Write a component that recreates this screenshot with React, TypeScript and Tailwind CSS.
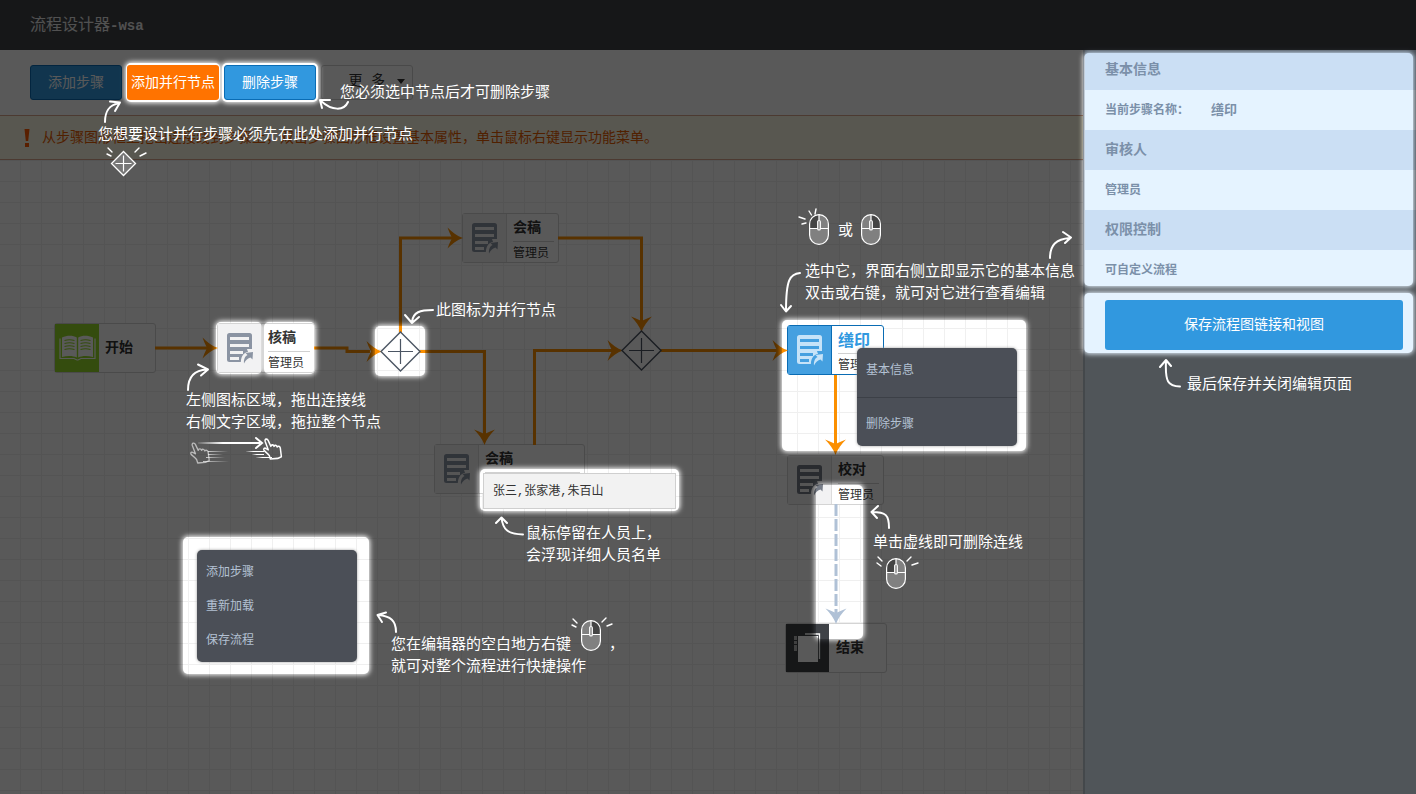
import React from "react";

type Tone = "gray" | "blue" | "dark";

const toneBox: Record<Tone, string> = {
  gray: "border-[#d4d4d4] bg-white",
  blue: "border-[#0a6cb4] bg-white",
  dark: "border-[#d4d4d4] bg-white",
};
const toneIcon: Record<Tone, string> = {
  gray: "border-[#dcdcdc] bg-[#f2f2f3] text-[#8b94a3]",
  blue: "border-[#0a6cb4] bg-[#45a0e0] text-[#c6e3f8]",
  dark: "border-[#dcdcdc] bg-[#f2f2f3] text-[#767c87]",
};
const toneSlit: Record<Tone, string> = { gray: "#f2f2f3", blue: "#45a0e0", dark: "#f2f2f3" };

function DocIcon({ tone }: { tone: Tone }) {
  const s = toneSlit[tone];
  return (
    <svg width="27" height="32" viewBox="0 0 27 32" aria-hidden="true">
      <rect x="0" y="0" width="25" height="29" rx="2.5" fill="currentColor" />
      <path d="M3 5.5h19M3 12.5h19M3 19.5h13M3 25.5h9" stroke={s} strokeWidth="3" />
      <path d="M14 32c-1-8 3-13 7-13l-1-3h7v16z" fill={s} />
      <path d="M17 30.5c-.5-5 1.500-7.500 3.500-8.500l-2-2 7.500-1-.5 7.500-2-2c-2.500 1-5 2.500-6.500 6z" fill="currentColor" />
    </svg>
  );
}

function StepNode(props: { name: string; person?: string; tone?: Tone; place: string }) {
  const tone = props.tone ?? "gray";
  return (
    <div className={`absolute flex h-[50px] rounded-[3px] border ${toneBox[tone]} ${props.place}`}>
      <div className={`flex w-[44px] shrink-0 items-center justify-center border-r pt-0.5 pl-0.5 ${toneIcon[tone]}`}>
        <DocIcon tone={tone} />
      </div>
      <div className="flex flex-1 flex-col overflow-hidden pl-1.5 pr-1 whitespace-nowrap">
        <div
          className={
            tone === "blue"
              ? "h-7 border-b border-[#d0d0d0] text-[16px] leading-[26px] font-bold text-[#3198df]"
              : "h-7 border-b border-[#d0d0d0] text-[14px] leading-[25px] font-bold text-[#333]"
          }
        >
          {props.name}
        </div>
        {props.person && <div className="text-[12px] leading-[20px] text-[#333]">{props.person}</div>}
      </div>
    </div>
  );
}

function Junction({ x, y }: { x: number; y: number }) {
  return (
    <g transform={`translate(${x} ${y})`} stroke="#4b5563" fill="#fff">
      <path d="M0-19.500 19.500 0 0 19.500-19.500 0z" strokeWidth="1.400" />
      <path d="M0-12.500v25M-12.500 0h25" strokeWidth="1.200" />
    </g>
  );
}

function Head({ x, y, down = false, color = "#fb8f00" }: { x: number; y: number; down?: boolean; color?: string }) {
  return (
    <path
      transform={`translate(${x} ${y}) rotate(${down ? 90 : 0})`}
      d="M0 0C-6-2-11-6-15.500-10.500Q-14-6-11 0Q-14 6-15.500 10.500C-11 6-6 2 0 0z"
      fill={color}
    />
  );
}

function Connectors() {
  return (
    <svg className="absolute inset-0 h-full w-full" aria-hidden="true">
      <g transform="translate(0 -160)">
        <g fill="none" stroke="#fb8f00" strokeWidth="3">
          <path d="M155 348H208" />
          <path d="M314 348H347V351.500H370" />
          <path d="M400.500 333V238H452" />
          <path d="M558 238H641.500V322" />
          <path d="M419 351.500H484.500V435" />
          <path d="M534.500 445V350.500H612" />
          <path d="M660 350.500H777" />
          <path d="M835.500 375V445" />
          <path d="M836 504V617" stroke="#b0c1d6" strokeDasharray="12 3" />
        </g>
        <Head x={218} y={348} />
        <Head x={382} y={351.5} />
        <Head x={463} y={238} />
        <Head x={641.5} y={332} down />
        <Head x={484.5} y={445} down />
        <Head x={623} y={350.5} />
        <Head x={788} y={350.5} />
        <Head x={835.5} y={455} down />
        <Head x={836} y={624} down color="#b0c1d6" />
        <Junction x={400.5} y={351.5} />
        <Junction x={641.5} y={350.5} />
      </g>
    </svg>
  );
}

function MenuItem({ children }: { children: React.ReactNode }) {
  return (
    <li>
      <button type="button" className="block h-[34px] w-full px-[9px] text-left text-[12px] leading-[34px] text-[#b3c1d3]">
        {children}
      </button>
    </li>
  );
}

function Canvas() {
  return (
    <section className="relative min-h-[634px] flex-1 overflow-hidden bg-white bg-[linear-gradient(to_right,#f0f0f0_1px,transparent_1px),linear-gradient(to_bottom,#efefef_1px,transparent_1px)] bg-size-[21px_21px] bg-position-[-1px_0px]">
      <div className="absolute top-[163px] left-[54px] flex h-[50px] w-[102px] items-center rounded-[3px] border border-[#d4d4d4] bg-white">
        <div className="flex h-[48px] w-[44px] items-center justify-center bg-[#94da28]">
          <svg width="37" height="26" viewBox="0 0 37 26" aria-hidden="true">
            <path d="M1 3.500v20h14l3 1.500h1l3-1.500h14v-20" fill="none" stroke="#fff" strokeWidth="1.200" />
            <path d="M3 2.500C8 0 14 0 17.800 2.500V22.500C14 20.500 8 20.500 3 22zM34 2.500C29 0 23 0 19.200 2.500V22.500C23 20.500 29 20.500 34 22z" fill="#fff" />
            <path d="M5.500 5.500q5-1.500 10 0M5.500 8.500q5-1.500 10 0M5.500 11.500q5-1.500 10 0M5.500 14.500q5-1.500 10 0M21.500 5.500q5-1.500 10 0M21.500 8.500q5-1.500 10 0M21.500 11.500q5-1.500 10 0M21.500 14.500q5-1.500 10 0" fill="none" stroke="#94da28" strokeWidth="1.200" />
          </svg>
        </div>
        <span className="pb-[3px] pl-1.5 text-[14px] font-bold text-[#333]">开始</span>
      </div>

      <StepNode name="核稿" person="管理员" place="left-[217px] top-[163px] w-[98px]" />
      <StepNode name="会稿" person="管理员" place="left-[462px] top-[53px] w-[97px]" />
      <StepNode name="会稿" place="left-[434px] top-[284px] w-[151px]" />
      <StepNode name="缮印" person="管理员" tone="blue" place="left-[787px] top-[165px] w-[97px]" />
      <StepNode name="校对" person="管理员" tone="dark" place="left-[787px] top-[295px] w-[97px]" />

      <div className="absolute top-[463px] left-[785px] flex h-[50px] w-[102px] items-center rounded-[3px] border border-[#d4d4d4] bg-white">
        <div className="flex h-[48px] w-[43px] items-center justify-center bg-[#3f4247]">
          <svg width="27" height="30" viewBox="0 0 27 30" aria-hidden="true">
            <path d="M11 1h14.500v25" fill="none" stroke="#fff" strokeWidth="1.300" />
            <path d="M4 3h20v26H4z" fill="#fff" />
            <path d="M0 3h3v4H0zM0 8h3v3H0zM0 12h3v6H0z" fill="#b8b8b8" />
          </svg>
        </div>
        <span className="pb-[3px] pl-[7px] text-[14px] font-bold text-[#333]">结束</span>
      </div>

      <Connectors />

      <div role="tooltip" className="absolute top-[313px] left-[483px] h-9 w-[193px] border border-[#cfcfcf] bg-[#f2f2f2] pl-[9px] font-['Liberation_Mono','Noto_Sans_CJK_SC',monospace] text-[12px] leading-9 text-[#333]">
        张三,张家港,朱百山
      </div>
      <ul className="absolute top-[188px] left-[857px] w-[160px] rounded-[5px] bg-[#4b4f57] pt-1 pb-1.5 shadow-[0_0_3px_#999]">
        <MenuItem>基本信息</MenuItem>
        <li role="separator" className="mt-[11px] mb-2 h-px bg-[#3c4047]" />
        <MenuItem>删除步骤</MenuItem>
      </ul>
      <ul className="absolute top-[390px] left-[197px] w-[160px] rounded-[5px] bg-[#4b4f57] pt-1 pb-1.5 shadow-[0_0_3px_#999]">
        <MenuItem>添加步骤</MenuItem>
        <MenuItem>重新加载</MenuItem>
        <MenuItem>保存流程</MenuItem>
      </ul>
    </section>
  );
}

function Sidebar() {
  return (
    <aside className="w-[333px] shrink-0 border-l-2 border-[#c3cdd8] bg-[#e5f3ff] font-bold text-[#7b90a9]">
      <h2 className="h-10 bg-[#cbdff4] pl-5 text-[14px] leading-[37px]">基本信息</h2>
      <dl className="flex h-10 pl-5 text-[12px] leading-[38px]">
        <dt className="w-[106px]">当前步骤名称：</dt>
        <dd className="text-[13px]">缮印</dd>
      </dl>
      <h2 className="h-10 bg-[#cbdff4] pl-5 text-[14px] leading-[37px]">审核人</h2>
      <p className="h-10 pl-5 text-[12px] leading-[38px]">管理员</p>
      <h2 className="h-10 bg-[#cbdff4] pl-5 text-[14px] leading-[37px]">权限控制</h2>
      <p className="h-10 pl-5 text-[12px] leading-[38px]">可自定义流程</p>
      <div className="pt-2.5 pr-[13px] pl-5">
        <button type="button" className="h-[50px] w-full rounded-[3px] bg-[#3198df] pb-[3px] text-[14px] font-normal text-white">
          保存流程图链接和视图
        </button>
      </div>
    </aside>
  );
}

const spots = [
  [126, 63, 94, 39],
  [222, 63, 96, 39],
  [216, 322, 46, 52],
  [264, 322, 51, 52],
  [375, 326, 50, 50],
  [480, 469, 199, 42],
  [782, 320, 244, 131],
  [816, 485, 47, 154],
  [183, 537, 186, 137],
];
const sideSpots = [
  [53, 233],
  [293, 60],
];

function Dimmer() {
  return (
    <svg className="pointer-events-none absolute inset-0 h-full w-full" aria-hidden="true">
      <defs>
        <filter id="soft" x="-20%" y="-20%" width="140%" height="140%">
          <feGaussianBlur stdDeviation="2.500" />
        </filter>
        <mask id="holes" maskUnits="userSpaceOnUse" x="0" y="0" width="100%" height="100%">
          <rect width="100%" height="100%" fill="#fff" />
          {spots.map(([x, y, w, h]) => (
            <g key={`${x}-${y}`}>
              <rect x={x - 1} y={y - 1} width={w + 2} height={h + 2} rx="6" filter="url(#soft)" />
              <rect x={x} y={y} width={w} height={h} rx="5" />
            </g>
          ))}
          {sideSpots.map(([y, h]) => (
            <g key={y}>
              <rect className="[x:calc(100%-333px)]" y={y - 1} width="331" height={h + 2} rx="6" filter="url(#soft)" />
              <rect className="[x:calc(100%-332px)]" y={y} width="329" height={h} rx="5" />
            </g>
          ))}
        </mask>
      </defs>
      <rect width="100%" height="100%" fill="#000" fillOpacity="0.650" mask="url(#holes)" />
    </svg>
  );
}

function Mouse({ x, y, side }: { x: number; y: number; side: "left" | "right" }) {
  return (
    <g transform={`translate(${x} ${y})`}>
      <rect x="0.600" y="0.600" width="18.800" height="29.800" rx="9.400" fill="#808080" />
      {side === "left" ? (
        <path d="M10 .6A9.400 9.400 0 0 0 .6 10v4.500H10z" fill="#444" />
      ) : (
        <path d="M10 .6A9.400 9.400 0 0 1 19.400 10v4.500H10z" fill="#444" />
      )}
      <g fill="none" stroke="#fff" strokeWidth="1.200">
        <rect x="0.600" y="0.600" width="18.800" height="29.800" rx="9.400" />
        <path d="M.6 14.500h18.800M10 .6v6" />
        <rect x="8.700" y="6.500" width="2.600" height="9.500" rx="1.300" fill="#808080" />
      </g>
    </g>
  );
}

const hand =
  "M4.500 15.500 1 12.500c-1-1.500.5-2.500 2-1.500l2 1L2 4.500C1.500 2.500 4 2 5 4l2.500 5c.5-2 2.500-1.500 3 0 .8-1.500 2.500-1 3 .5 1-1.200 2.500-.5 3 1l1 7.500-3.500 1.500-7 .5-1-3z";

function Doodles() {
  return (
    <svg className="absolute inset-0 h-full w-full" aria-hidden="true">
      <defs>
        <linearGradient id="fadeIn">
          <stop offset="0" stopColor="#fff" stopOpacity="0.100" />
          <stop offset="0.400" stopColor="#fff" />
        </linearGradient>
        <linearGradient id="fadeOut">
          <stop offset="0" stopColor="#fff" stopOpacity="0.700" />
          <stop offset="1" stopColor="#fff" stopOpacity="0" />
        </linearGradient>
      </defs>
      <g fill="none" stroke="#fff" strokeWidth="2" strokeLinecap="round" strokeLinejoin="round">
        <path d="M105 122C105 110 110 105 119 103M110 101.500L120 102.500L115 111" />
        <path d="M348 102C344 111 332 111 321 101M330 100L320 100L322 108" />
        <path d="M188 390C188 376 195 370 207 369.500M198 364.500L208 369.500L201 375.500" />
        <path d="M433 310C420 310 413 312 412 322M405 315L412 323L419 317" />
        <path d="M523 534.500C508 534 503 530 501.500 518M496 523L501.500 517.500L507 523" />
        <path d="M800 273C790 274 786 279 786 311M781 305L786 311.500L791 306" />
        <path d="M1050 258C1050 245 1056 239 1070 238M1063 232L1071 237.500L1065 243" />
        <path d="M889 528C889 515 886 512 872 512M878 506L871.500 512L877 518" />
        <path d="M396 632C396 621 391 616 378 615M386 612.500L377.500 615L382 622" />
      </g>
      <g fill="none" stroke="#fff" strokeWidth="1.400" strokeLinecap="round">
        <path d="M108 148l4 4M107 154l4 2M135 152l4-4M140 156l6-3" />
        <path d="M809 211l2.500 4M816 209l-1 5M799 217l6 2M802 224l4-1" />
        <path d="M878 557l4 4M877 563l4 3M907 561l4-4M912 565l6-2" />
        <path d="M573 619l4 4M572 625l4 2M602 622l4-4M607 626l5-2" />
      </g>
      <path d="M123.500 151.500 135.500 163.500 123.500 175.500 111.500 163.500z" fill="#777" stroke="#fff" strokeWidth="1.300" />
      <path d="M123.500 155.500v16M115.500 163.500h16" stroke="#fff" strokeWidth="1.200" />
      <Mouse x={809} y={214} side="left" />
      <Mouse x={861} y={214} side="right" />
      <Mouse x={886} y={558} side="left" />
      <Mouse x={581} y={620} side="right" />
      <path d={hand} transform="translate(190 440) scale(1.100 1.150)" fill="none" stroke="#bbb" strokeWidth="1.200" strokeLinejoin="round" />
      <path d={hand} transform="translate(263 436) scale(1.050 1.150)" fill="none" stroke="#fff" strokeWidth="1.400" strokeLinejoin="round" />
      <rect x="198" y="442" width="62" height="2" fill="url(#fadeIn)" />
      <path d="M256 438l6 5-6 5" fill="none" stroke="#fff" strokeWidth="2" strokeLinecap="round" />
      <rect x="208" y="451" width="20" height="1" fill="url(#fadeOut)" />
      <rect x="208" y="454" width="15" height="1" fill="url(#fadeOut)" />
      <rect x="206" y="457" width="19" height="1" fill="url(#fadeOut)" />
      <rect x="203" y="461" width="26" height="1" fill="url(#fadeOut)" />
      <rect x="246" y="451" width="18" height="1" fill="url(#fadeIn)" />
      <rect x="252" y="454" width="12" height="1" fill="url(#fadeIn)" />
      <rect x="256" y="457" width="16" height="1" fill="url(#fadeIn)" />
    </svg>
  );
}

function Hint({ place, children }: { place: string; children: React.ReactNode }) {
  return <p className={`absolute whitespace-nowrap text-[15px] leading-[22px] text-white ${place}`}>{children}</p>;
}

function Guide() {
  return (
    <div className="pointer-events-none absolute inset-0 overflow-hidden">
      <Doodles />
      <Hint place="left-[98px] top-[122px]">您想要设计并行步骤必须先在此处添加并行节点</Hint>
      <Hint place="left-[340px] top-[80px]">您必须选中节点后才可删除步骤</Hint>
      <Hint place="left-[186px] top-[388px]">
        左侧图标区域，拖出连接线
        <br />
        右侧文字区域，拖拉整个节点
      </Hint>
      <Hint place="left-[436px] top-[298px]">此图标为并行节点</Hint>
      <Hint place="left-[526px] top-[521px]">
        鼠标停留在人员上，
        <br />
        会浮现详细人员名单
      </Hint>
      <Hint place="left-[838px] top-[218px]">或</Hint>
      <Hint place="left-[805px] top-[259px]">
        选中它，界面右侧立即显示它的基本信息
        <br />
        双击或右键，就可对它进行查看编辑
      </Hint>
      <Hint place="left-[873px] top-[530px]">单击虚线即可删除连线</Hint>
      <Hint place="left-[391px] top-[632px]">
        您在编辑器的空白地方右键
        <span className="pl-[38px]">，</span>
        <br />
        就可对整个流程进行快捷操作
      </Hint>
      <div className="absolute top-[358px] right-[64px] flex gap-1.5">
        <svg width="24" height="32" viewBox="0 0 24 32" fill="none" stroke="#fff" strokeWidth="2" strokeLinecap="round" strokeLinejoin="round" aria-hidden="true">
          <path d="M23 28.500C11 28 8 24 9 3M3 9l6-7 5 6" />
        </svg>
        <p className="pt-3.5 text-[15px] leading-[22px] whitespace-nowrap text-white">最后保存并关闭编辑页面</p>
      </div>
    </div>
  );
}

export default function App() {
  return (
    <div className="relative flex min-h-screen flex-col overflow-hidden bg-white font-['Noto_Sans_CJK_SC',sans-serif]">
      <header className="flex h-[50px] items-center bg-[#3f4247] px-[30px] pb-0.5">
        <h1 className="text-[16px] text-[#e8e8e8]">
          流程设计器
          <span className="font-['Liberation_Mono',monospace] text-[14px] font-bold">-wsa</span>
        </h1>
      </header>
      <div className="flex flex-1">
        <main className="flex min-w-0 flex-1 flex-col">
          <div className="flex h-[65px] gap-[5px] pt-[15px] pl-[30px] text-[14px]">
            <button type="button" className="h-[35px] w-[92px] rounded-[3px] border border-[#0a6cb4] bg-[#3198df] pb-0.5 text-white">
              添加步骤
            </button>
            <button type="button" className="h-[35px] w-[92px] rounded-[3px] bg-[#ff7300] pb-0.5 text-white">
              添加并行节点
            </button>
            <button type="button" className="h-[35px] w-[92px] rounded-[3px] border border-[#0a6cb4] bg-[#3198df] pb-0.5 text-white">
              删除步骤
            </button>
            <button type="button" className="flex h-[35px] w-[92px] items-center justify-end gap-3 rounded-[3px] border border-[#d0d0d0] pr-[7px] pb-0.5 font-['Liberation_Mono','Noto_Sans_CJK_SC',monospace] text-[#333]">
              更 多
              <svg width="8" height="5" viewBox="0 0 8 5" aria-hidden="true">
                <path d="M0 0h8L4 5z" fill="#333" />
              </svg>
            </button>
          </div>
          <div className="flex h-[45px] items-center gap-3 border-y border-[#d9a68c] bg-[#fdf9e4] pl-6 text-[14px] text-[#e65c00]">
            <svg width="6" height="18" viewBox="0 0 6 18" aria-hidden="true">
              <path d="M.5 0h5L4.200 12H1.800zM1 14h4v4H1z" fill="#ff5a00" />
            </svg>
            <p className="pb-0.5 whitespace-nowrap">
              从步骤图形框上拖出连接线到步骤上，双击步骤图形框设置基本属性，单击鼠标右键显示功能菜单。
            </p>
          </div>
          <Canvas />
        </main>
        <Sidebar />
      </div>
      <Dimmer />
      <Guide />
    </div>
  );
}
